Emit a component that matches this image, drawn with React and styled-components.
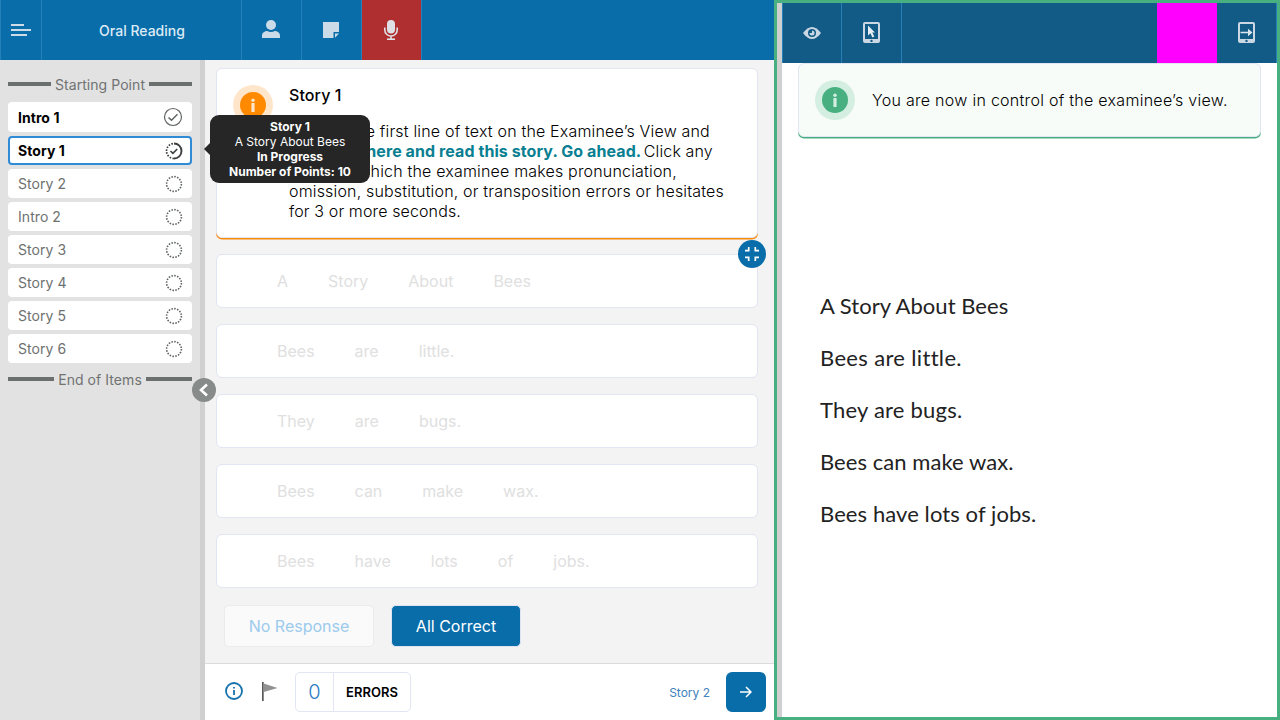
import React from "react";
import styled, { createGlobalStyle, css } from "styled-components";

const Global = createGlobalStyle`
  * { box-sizing: border-box; }
  body { margin: 0; font-family: Inter, "Liberation Sans", sans-serif; color: #000; overflow: hidden; }
  button { font: inherit; padding: 0; margin: 0; }
  svg { display: block; flex: none; }
`;

const Screen = styled.div`
  display: flex;
  width: 1280px;
  height: 720px;
  overflow: hidden;
`;

const ExaminerView = styled.section`
  display: flex;
  flex-direction: column;
  width: 774px;
  height: 720px;
`;

const TopBar = styled.header`
  display: flex;
  height: 60px;
  flex: none;
  background: ${(p) => (p.$dark ? "#135b87" : "#096daa")};
  border-left: 1px solid #2580b9;
`;

const BarCell = styled.div`
  display: flex;
  align-items: center;
  justify-content: center;
  width: ${(p) => p.$w}px;
  height: 60px;
  padding: ${(p) => p.$pad || 0};
  background: ${(p) => p.$bg || "transparent"};
  border-right: ${(p) => (p.$plain ? 0 : 1)}px solid #2580b9;
  color: #cbdce8;
`;

const BarTitle = styled.h1`
  margin: 1px 0 0 1px;
  font-size: 14px;
  font-weight: 500;
  color: #dcebf5;
`;

const Spacer = styled.div`
  flex: 1;
`;

const Body = styled.div`
  display: flex;
  flex: 1;
  min-height: 0;
`;

const Sidebar = styled.nav`
  position: relative;
  width: 205px;
  padding: 14px 8px 0;
  background: #e2e2e2;
  border-right: 5px solid #d0d0d0;
`;

const Divider = styled.div`
  display: flex;
  align-items: center;
  gap: 4px;
  height: 20px;
  margin: ${(p) => (p.$end ? "6px 0 0" : "0 0 8px")};
  font-size: 14px;
  letter-spacing: 0.06px;
  color: #707372;
  white-space: nowrap;
  &::before, &::after {
    content: "";
    flex: 1;
    height: 4px;
    background: #6b6f6d;
  }
`;

const ItemRow = styled.div`
  display: flex;
  align-items: center;
  justify-content: space-between;
  height: ${(p) => (p.$done ? 30 : 29)}px;
  margin-bottom: 4px;
  padding: 0 9px 0 10px;
  border-radius: 4px;
  background: #fff;
  font-size: 14px;
  letter-spacing: 0.06px;
  color: #6d7170;
  ${(p) => p.$done && css`color: #000; font-weight: 650;`}
  ${(p) => p.$active && css`
    color: #000;
    font-weight: 650;
    border: 2px solid #2f8bd6;
    padding: 0 7px 0 8px;
  `}
`;

const Collapse = styled.button`
  position: absolute;
  left: 192px;
  top: 318px;
  z-index: 2;
  width: 24px;
  height: 24px;
  display: grid;
  place-items: center;
  border: 0;
  border-radius: 50%;
  background: #878b8a;
`;

const Tooltip = styled.div`
  position: absolute;
  left: 210px;
  top: 55px;
  z-index: 3;
  width: 160px;
  height: 68px;
  padding-top: 4px;
  border-radius: 9px;
  background: #262626;
  color: #fff;
  text-align: center;
  font-size: 12px;
  line-height: 15px;
  &::before {
    content: "";
    position: absolute;
    left: -6px;
    top: 28px;
    border: 6px solid transparent;
    border-left: 0;
    border-right-color: #262626;
  }
`;

const TipLine = styled.div`
  font-weight: ${(p) => (p.$b ? 700 : 400)};
`;

const Main = styled.main`
  display: flex;
  flex-direction: column;
  flex: 1;
  background: #f3f3f3;
`;

const Content = styled.div`
  display: flex;
  flex-direction: column;
  gap: 16px;
  padding: 8px 16px 0 11px;
  height: 603px;
`;

const Notice = styled.article`
  display: flex;
  gap: ${(p) => p.$gap || 16}px;
  height: ${(p) => p.$h}px;
  padding: 16px;
  border: 1px solid #e2e6f2;
  border-radius: 6px;
  box-shadow: 0 1.500px 0 ${(p) => p.$accent};
  background: ${(p) => p.$bg};
  white-space: nowrap;
`;

const Prose = styled.div`
  font-size: 16px;
  line-height: ${(p) => p.$lh || 20}px;
  font-weight: 300;
`;

const StoryTitle = styled.h2`
  margin: 0 0 16px;
  font-size: 16px;
  line-height: 20px;
  font-weight: 500;
  letter-spacing: 0.1px;
`;

const ProseLine = styled.div`
  letter-spacing: ${(p) => p.$ls || 0}px;
`;

const Spoken = styled.b`
  margin-right: -2px;
  color: #0a7f92;
  font-weight: 700;
  letter-spacing: 0.08px;
`;

const WordRow = styled.div`
  position: relative;
  display: flex;
  align-items: center;
  gap: 40px;
  height: 54px;
  padding-left: 60px;
  border: 1px solid #e2e6f2;
  border-radius: 6px;
  background: #fff;
  font-size: 16px;
  color: #e0e0e0;
`;

const Shrink = styled.button`
  position: absolute;
  right: -9px;
  top: -15px;
  width: 28px;
  height: 28px;
  display: grid;
  place-items: center;
  border: 0;
  border-radius: 50%;
  background: #096daa;
`;

const Actions = styled.div`
  display: flex;
  gap: 17px;
  margin: 1px 0 0 8px;
`;

const ActionButton = styled.button`
  width: ${(p) => p.$w}px;
  height: 42px;
  border-radius: 5px;
  border: 1px solid ${(p) => (p.$primary ? "#dde5f2" : "#ebebeb")};
  background: ${(p) => (p.$primary ? "#096daa" : "#fafafa")};
  color: ${(p) => (p.$primary ? "#fff" : "#9ccbed")};
  font-size: 16px;
`;

const Footer = styled.footer`
  display: flex;
  align-items: center;
  height: 57px;
  padding: 0 8px 0 20px;
  border-top: 1px solid #dcdcdc;
  background: #fff;
`;

const FooterIcons = styled.div`
  display: flex;
  align-items: center;
  gap: 19px;
  padding-bottom: 2px;
`;

const Counter = styled.div`
  display: flex;
  width: 116px;
  height: 40px;
  margin-left: 17px;
  border: 1px solid #e2e6f2;
  border-radius: 5px;
`;

const Count = styled.div`
  width: 38px;
  display: grid;
  place-items: center;
  border-right: 1px solid #e2e6f2;
  color: #2a7abf;
  font-size: 20px;
  font-weight: 300;
`;

const CountLabel = styled.div`
  flex: 1;
  display: grid;
  place-items: center;
  font-size: 13px;
  font-weight: 600;
`;

const NextLabel = styled.span`
  margin-right: 16px;
  font-size: 12px;
  color: #4182bd;
`;

const NextButton = styled.button`
  width: 40px;
  height: 40px;
  display: grid;
  place-items: center;
  border: 0;
  border-radius: 6px;
  background: #096daa;
`;

const ExamineeView = styled.section`
  width: 506px;
  height: 720px;
  border: 3px solid #48b080;
  background: #fff;
`;

const ExamineeInner = styled.div`
  height: 714px;
  border-left: 5px solid #d0d0d0;
`;

const NoticeWrap = styled.div`
  padding: 0 16px;
`;

const Passage = styled.div`
  padding: 143px 0 0 38px;
`;

const PassageLine = styled.p`
  margin: 0;
  height: 52px;
  line-height: 52px;
  font-family: Lato, "Open Sans", sans-serif;
  font-size: 22px;
  color: #222;
  letter-spacing: ${(p) => p.$ls}px;
  white-space: nowrap;
`;

const InfoBadge = ({ color, halo }) => (
  <svg width="40" height="40" viewBox="0 0 40 40">
    <circle cx="20" cy="20" r="20" fill={halo} />
    <circle cx="20" cy="20" r="13" fill={color} />
    <circle cx="20" cy="15.3" r="1.7" fill={halo} />
    <rect x="18.4" y="18" width="3.2" height="9" rx=".4" fill={halo} />
  </svg>
);

const MenuIcon = () => (
  <svg width="20" height="12" viewBox="0 0 20 12" fill="#cbdce8">
    <path d="M0 0h13v2H0zM0 5h20v2H0zM0 10h16v2H0z" />
  </svg>
);

const PersonIcon = () => (
  <svg width="18" height="18" viewBox="0 0 18 18" fill="currentColor">
    <circle cx="9" cy="5" r="5" />
    <path d="M0 18v-2.500C0 12.500 3 11 5.200 11c2 1.300 5.600 1.300 7.600 0C15 11 18 12.500 18 15.500V18z" />
  </svg>
);

const NoteIcon = () => (
  <svg width="16" height="16" viewBox="0 0 16 16" fill="currentColor">
    <path d="M0 0h16v10h-5.500v6H0zM12 11.500h4L12 15.700z" />
  </svg>
);

const MicIcon = () => (
  <svg width="14" height="20" viewBox="0 0 14 20" fill="none" stroke="#dfe0e5">
    <rect x="3" y="0" width="8" height="13.500" rx="4" fill="#dfe0e5" stroke="none" />
    <path d="M.8 7.500v2.500a6.200 6 0 0 0 12.400 0V7.500M7 16v3" strokeWidth="1.600" />
    <path d="M3 19.200h8" strokeWidth="1.600" />
  </svg>
);

const EyeIcon = () => (
  <svg width="18" height="12" viewBox="0 0 18 12">
    <path d="M0 6Q9-6 18 6Q9 18 0 6z" fill="#cbd8e3" />
    <circle cx="9" cy="6" r="4" fill="#135b87" />
    <path d="M9 3.500a2.500 2.500 0 1 1-2.500 2.500H9z" fill="#cbd8e3" />
  </svg>
);

const TabletIcon = ({ arrow }) => (
  <svg width="17" height="21" viewBox="0 0 17 21">
    <path fillRule="evenodd" fill="#cbd8e3" d="M2 0h13a2 2 0 0 1 2 2v17a2 2 0 0 1-2 2H2a2 2 0 0 1-2-2V2a2 2 0 0 1 2-2zM2 2v15h13V2z" />
    <circle cx="8.500" cy="18.900" r="1.200" fill="#135b87" />
    {arrow ? (
      <path d="M2.500 9.700H10V6.700l4.500 3.800-4.500 3.800v-3H2.500z" fill="#dbe5ed" />
    ) : (
      <path d="M5 3.500l7 7H9.300l2 4-1.900 1-2-4.200L5 13.400z" fill="#e8eef3" />
    )}
  </svg>
);

const DoneIcon = () => (
  <svg width="20" height="20" viewBox="0 0 20 20" fill="none" stroke="#5f6462">
    <circle cx="10" cy="10" r="8.500" strokeWidth="1.200" />
    <path d="M5.500 10.500l3 2.800 6-6" strokeWidth="1.500" />
  </svg>
);

const DottedIcon = () => (
  <svg width="18" height="18" viewBox="0 0 18 18" fill="none" stroke="#5f6462">
    <circle cx="9" cy="9" r="7.400" strokeWidth="1.600" strokeDasharray="1.550 1.356" />
  </svg>
);

const ProgressIcon = () => (
  <svg width="18" height="18" viewBox="0 0 18 18" fill="none" stroke="#3c3f3e">
    <path d="M9 1.500a7.500 7.500 0 0 1 0 15" strokeWidth="1.900" />
    <path d="M9 16.500a7.500 7.500 0 0 1 0-15" strokeWidth="1.700" strokeDasharray="1.600 1.350" />
    <path d="M5.500 9l2.400 2.300 4.300-4.300" strokeWidth="1.600" />
  </svg>
);

const InfoIcon = () => (
  <svg width="18" height="18" viewBox="0 0 18 18" fill="none" stroke="#1672ad" strokeWidth="1.800">
    <circle cx="9" cy="9" r="8" />
    <path d="M9 8v5M9 5v1.600" />
  </svg>
);

const FlagIcon = () => (
  <svg width="16" height="19" viewBox="0 0 16 19">
    <path d="M0 0h1.700v19H0z" fill="#58595b" />
    <path d="M1.700 1.500L15.500 6 1.700 10z" fill="#919191" />
  </svg>
);

const items = ["Story 2", "Intro 2", "Story 3", "Story 4", "Story 5", "Story 6"];

const wordRows = [
  ["A", "Story", "About", "Bees"],
  ["Bees", "are", "little."],
  ["They", "are", "bugs."],
  ["Bees", "can", "make", "wax."],
  ["Bees", "have", "lots", "of", "jobs."],
];

const passage = [
  ["A Story About Bees", 0.04],
  ["Bees are little.", 0.34],
  ["They are bugs.", 0.22],
  ["Bees can make wax.", 0.06],
  ["Bees have lots of jobs.", 0.09],
];

export default function App() {
  return (
    <Screen>
      <Global />
      <ExaminerView>
        <TopBar>
          <BarCell $w={41}><MenuIcon /></BarCell>
          <BarCell $w={200}><BarTitle>Oral Reading</BarTitle></BarCell>
          <BarCell $w={60} $pad="0 2px 2px 0"><PersonIcon /></BarCell>
          <BarCell $w={60} $pad="0 2px 0 0"><NoteIcon /></BarCell>
          <BarCell $w={60} $pad="0 2px 0 0" $bg="#af2e2f"><MicIcon /></BarCell>
        </TopBar>
        <Body>
          <Sidebar>
            <Divider>Starting Point</Divider>
            <ItemRow $done>Intro 1<DoneIcon /></ItemRow>
            <ItemRow $active>Story 1<ProgressIcon /></ItemRow>
            {items.map((t) => (
              <ItemRow key={t}>{t}<DottedIcon /></ItemRow>
            ))}
            <Divider $end>End of Items</Divider>
            <Tooltip>
              <TipLine $b>Story 1</TipLine>
              <TipLine>A Story About Bees</TipLine>
              <TipLine $b>In Progress</TipLine>
              <TipLine $b>Number of Points: 10</TipLine>
            </Tooltip>
            <Collapse>
              <svg width="12" height="14" viewBox="0 0 12 14" fill="none" stroke="#fff" strokeWidth="2.600">
                <path d="M9 1.500L3 7l6 5.500" />
              </svg>
            </Collapse>
          </Sidebar>
          <Main>
            <Content>
              <Notice $h={170} $bg="#fff" $accent="#fb8c0b">
                <InfoBadge color="#ff8a00" halo="#ffe6cb" />
                <Prose>
                  <StoryTitle>Story 1</StoryTitle>
                  <ProseLine $ls={0.18}>Point to the first line of text on the Examinee’s View and</ProseLine>
                  <ProseLine $ls={0.12}>say, <Spoken>Start here and read this story. Go ahead.</Spoken> Click any</ProseLine>
                  <ProseLine $ls={0.18}>word for which the examinee makes pronunciation,</ProseLine>
                  <ProseLine $ls={0.17}>omission, substitution, or transposition errors or hesitates</ProseLine>
                  <ProseLine $ls={0.12}>for 3 or more seconds.</ProseLine>
                </Prose>
              </Notice>
              {wordRows.map((words, i) => (
                <WordRow key={i}>
                  {words.map((w, j) => <span key={j}>{w}</span>)}
                  {i === 0 && (
                    <Shrink>
                      <svg width="14" height="14" viewBox="0 0 14 14" fill="none" stroke="#fff" strokeWidth="1.700">
                        <path d="M0 3.700h3.700V0M10.300 0v3.700H14M0 10.300h3.700V14M14 10.300h-3.700V14" />
                      </svg>
                    </Shrink>
                  )}
                </WordRow>
              ))}
              <Actions>
                <ActionButton $w={150}>No Response</ActionButton>
                <ActionButton $w={130} $primary>All Correct</ActionButton>
              </Actions>
            </Content>
            <Footer>
              <FooterIcons>
                <InfoIcon />
                <FlagIcon />
              </FooterIcons>
              <Counter>
                <Count>0</Count>
                <CountLabel>ERRORS</CountLabel>
              </Counter>
              <Spacer />
              <NextLabel>Story 2</NextLabel>
              <NextButton>
                <svg width="12" height="12" viewBox="0 0 12 12" fill="none" stroke="#fff" strokeWidth="1.500">
                  <path d="M0 6h11M6 1l5 5-5 5" />
                </svg>
              </NextButton>
            </Footer>
          </Main>
        </Body>
      </ExaminerView>
      <ExamineeView>
        <ExamineeInner>
          <TopBar $dark>
            <BarCell $w={59}><EyeIcon /></BarCell>
            <BarCell $w={60} $pad="0 0 2px"><TabletIcon /></BarCell>
            <Spacer />
            <BarCell $w={60} $bg="#ff00ff" $plain />
            <BarCell $w={60} $pad="0 0 2px"><TabletIcon arrow /></BarCell>
          </TopBar>
          <NoticeWrap>
            <Notice $h={74} $gap={17} $bg="#f7fcf9" $accent="#48b080">
              <InfoBadge color="#48b080" halo="#d5eee2" />
              <Prose $lh={40}>
                <ProseLine $ls={0.28}>You are now in control of the examinee’s view.</ProseLine>
              </Prose>
            </Notice>
          </NoticeWrap>
          <Passage>
            {passage.map(([t, ls]) => <PassageLine key={t} $ls={ls}>{t}</PassageLine>)}
          </Passage>
        </ExamineeInner>
      </ExamineeView>
    </Screen>
  );
}
